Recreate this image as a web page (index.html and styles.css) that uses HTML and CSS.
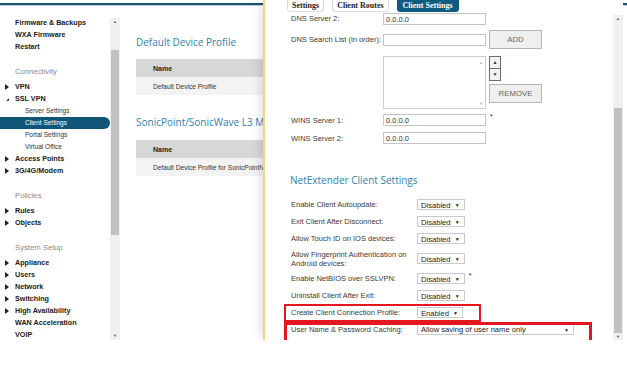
FILE: index.html
```html
<!DOCTYPE html>
<html>
<head>
    <title>SSL VPN - Client Settings</title>
    <link rel="stylesheet" href="styles.css">
</head>
<body>

<div class="screen">
    <div class="topline"></div>

    <div class="main">
        <div class="sidebar">
            <ul class="nav">
                <li class="item">Firmware &amp; Backups</li>
                <li class="item">WXA Firmware</li>
                <li class="item">Restart</li>

                <li class="section">Connectivity</li>
                <li class="item closed">VPN</li>
                <li class="item open">SSL VPN</li>
                <li class="sub">Server Settings</li>
                <li class="sub active">Client Settings</li>
                <li class="sub">Portal Settings</li>
                <li class="sub">Virtual Office</li>
                <li class="item closed">Access Points</li>
                <li class="item closed">3G/4G/Modem</li>

                <li class="section">Policies</li>
                <li class="item closed">Rules</li>
                <li class="item closed">Objects</li>

                <li class="section">System Setup</li>
                <li class="item closed">Appliance</li>
                <li class="item closed">Users</li>
                <li class="item closed">Network</li>
                <li class="item closed">Switching</li>
                <li class="item closed">High Availability</li>
                <li class="item">WAN Acceleration</li>
                <li class="item">VOIP</li>
            </ul>
            <div class="vscroll side-scroll">
                <div class="arrow">&#9650;</div>
                <div class="track"><div class="thumb"></div></div>
                <div class="arrow">&#9660;</div>
            </div>
        </div>

        <div class="content">
            <h3 class="title first">Default Device Profile</h3>
            <table class="grid">
                <thead>
                    <tr><th>Name</th></tr>
                </thead>
                <tbody>
                    <tr><td>Default Device Profile</td></tr>
                </tbody>
            </table>

            <h3 class="title">SonicPoint/SonicWave L3 Management Default Profile</h3>
            <table class="grid">
                <thead>
                    <tr><th>Name</th></tr>
                </thead>
                <tbody>
                    <tr><td>Default Device Profile for SonicPointN</td></tr>
                </tbody>
            </table>
        </div>
    </div>

    <!-- slide-in settings panel -->
    <div class="panel">
        <div class="panel-main">
            <div class="tabs">
                <span class="tab">Settings</span>
                <span class="tab">Client Routes</span>
                <span class="tab active">Client Settings</span>
            </div>

            <div class="form">
                <div class="row r-dns2">
                    <span class="label">DNS Server 2:</span>
                    <span class="field">0.0.0.0</span>
                </div>
                <div class="row r-search">
                    <span class="label">DNS Search List (in order):</span>
                    <span class="field"></span>
                    <span class="btn btn-add">ADD</span>
                </div>
                <div class="row r-list">
                    <span class="label"></span>
                    <div class="listbox">
                        <span class="lb-arrow">&#9650;</span>
                        <span class="lb-arrow">&#9660;</span>
                    </div>
                    <div class="list-ctrl">
                        <div class="updown">
                            <span>&#9650;</span>
                            <span>&#9660;</span>
                        </div>
                        <span class="btn btn-remove">REMOVE</span>
                    </div>
                </div>
                <div class="row r-wins">
                    <span class="label">WINS Server 1:</span>
                    <span class="field">0.0.0.0</span>
                    <span class="req">*</span>
                </div>
                <div class="row r-wins">
                    <span class="label">WINS Server 2:</span>
                    <span class="field">0.0.0.0</span>
                </div>

                <h3 class="title sub-title">NetExtender Client Settings</h3>

                <div class="opt">
                    <span class="label">Enable Client Autoupdate:</span>
                    <span class="select">Disabled <i>&#9660;</i></span>
                </div>
                <div class="opt">
                    <span class="label">Exit Client After Disconnect:</span>
                    <span class="select">Disabled <i>&#9660;</i></span>
                </div>
                <div class="opt">
                    <span class="label">Allow Touch ID on IOS devices:</span>
                    <span class="select">Disabled <i>&#9660;</i></span>
                </div>
                <div class="opt tall">
                    <span class="label">Allow Fingerprint Authentication on Android devices:</span>
                    <span class="select">Disabled <i>&#9660;</i></span>
                </div>
                <div class="opt">
                    <span class="label">Enable NetBIOS over SSLVPN:</span>
                    <span class="select">Disabled <i>&#9660;</i></span>
                    <span class="req">*</span>
                </div>
                <div class="opt">
                    <span class="label">Uninstall Client After Exit:</span>
                    <span class="select">Disabled <i>&#9660;</i></span>
                </div>
                <div class="opt marked">
                    <span class="label">Create Client Connection Profile:</span>
                    <span class="select">Enabled <i>&#9660;</i></span>
                    <span class="mark mark-one"></span>
                </div>
                <div class="opt marked">
                    <span class="label">User Name &amp; Password Caching:</span>
                    <span class="select wide">Allow saving of user name only <i>&#9660;</i></span>
                    <span class="mark mark-two"></span>
                </div>
            </div>
        </div>

        <div class="vscroll panel-scroll">
            <div class="arrow">&#9650;</div>
            <div class="track"><div class="thumb"></div></div>
            <div class="arrow">&#9660;</div>
        </div>
    </div>
</div>

</body>
</html>
```

FILE: styles.css
```css
body {
    margin: 0;
    background: #fff;
    font-family: "Liberation Sans", Arial, sans-serif;
    color: #333;
}
.screen {
    position: relative;
    width: 627px;
    height: 340px;
    display: flex;
    flex-direction: column;
}
.topline {
    margin-top: 3px;
    height: 2px;
    background: #1d4f70;
    border-bottom: 1px solid #b9d2e3;
}
.main {
    flex: 1;
    display: flex;
    min-height: 0;
}

/* sidebar */
.sidebar {
    width: 121px;
    flex: none;
    display: flex;
}
.nav {
    list-style: none;
    margin: 0;
    padding: 11px 0 0 0;
    width: 110px;
}
.nav li {
    height: 12px;
    line-height: 12px;
    white-space: nowrap;
}
.item {
    padding-left: 15px;
    font-weight: bold;
    font-size: 7.2px;
    color: #1a1a1a;
}
.closed::before {
    content: "";
    display: inline-block;
    margin-left: -10px;
    margin-right: 6px;
    border-left: 4px solid #222;
    border-top: 3px solid transparent;
    border-bottom: 3px solid transparent;
    vertical-align: -1px;
}
.open::before {
    content: "";
    display: inline-block;
    margin-left: -9px;
    margin-right: 6px;
    border-right: 3px solid #444;
    border-top: 3px solid transparent;
    vertical-align: 0;
}
.section {
    padding-left: 15px;
    margin: 13px 0 3px 0;
    font-size: 7.7px;
    color: #8a8a8a;
}
.sub {
    padding-left: 25px;
    font-size: 6.5px;
    color: #333;
}
.sub.active {
    background: #0f5577;
    color: #fff;
    border-radius: 0 6px 6px 0;
}

/* scrollbars */
.vscroll {
    width: 10px;
    display: flex;
    flex-direction: column;
    background: #f0f0f0;
}
.vscroll .arrow {
    height: 8px;
    line-height: 8px;
    font-size: 4px;
    text-align: center;
    color: #555;
}
.vscroll .track {
    flex: 1;
    display: flex;
    flex-direction: column;
}
.vscroll .thumb {
    margin: 0 1px;
    background: #c2c2c2;
}
.side-scroll {
    margin-top: 12px;
}
.side-scroll .thumb {
    margin-top: 24px;
    height: 185px;
}
.panel-scroll {
    margin-top: 15px;
}
.panel-scroll .thumb {
    margin-top: 85px;
    height: 225px;
}

/* page content, cut off where the panel starts */
.content {
    width: 127px;
    flex: none;
    padding-left: 15px;
    overflow: hidden;
}
.title {
    margin: 20px 0 11px 0;
    height: 14px;
    line-height: 14px;
    font-family: "Open Sans", "Liberation Sans", sans-serif;
    font-weight: normal;
    font-size: 10px;
    color: #2f7fb0;
    white-space: nowrap;
}
.title.first {
    margin-top: 29px;
    margin-bottom: 10px;
}
.grid {
    border-collapse: collapse;
    width: 100%;
}
.grid th, .grid td {
    height: 18px;
    padding: 0 0 0 17px;
    text-align: left;
    white-space: nowrap;
}
.grid th {
    background: #d7d7d7;
    font-size: 7px;
    color: #222;
}
.grid td {
    background: #f3f3f3;
    font-size: 6.6px;
    color: #333;
}

/* panel */
.panel {
    position: absolute;
    top: 0;
    left: 263px;
    width: 360px;
    height: 340px;
    display: flex;
    background: #fff;
    border-left: 2px solid #f2d38a;
    box-sizing: border-box;
    box-shadow: -7px 0 8px -3px rgba(0, 0, 0, 0.1);
}
.panel-main {
    flex: 1;
}
.tabs {
    height: 12px;
    overflow: hidden;
    display: flex;
    gap: 8px;
    padding-left: 22px;
}
.tab {
    margin-top: -4px;
    height: 16px;
    line-height: 17px;
    padding: 0 4px;
    border: 1px solid #dcdcdc;
    border-radius: 3px;
    font-family: "Liberation Serif", serif;
    font-weight: bold;
    font-size: 8px;
    color: #222;
    box-sizing: border-box;
}
.tab.active {
    background: #0d5b80;
    border-color: #0d5b80;
    color: #fff;
    padding: 0 5px;
}
.form {
    padding-left: 26px;
}
.label {
    font-size: 7.5px;
    color: #3a3a3a;
}
.row {
    display: flex;
    align-items: center;
}
.row .label {
    width: 92px;
    flex: none;
    white-space: nowrap;
}
.field {
    width: 103px;
    height: 12px;
    line-height: 11px;
    padding-left: 2px;
    border: 1px solid #c4c4c4;
    box-sizing: border-box;
    font-size: 7.5px;
    color: #333;
}
.r-dns2 {
    height: 13px;
}
.r-search {
    margin-top: 4px;
    height: 21px;
}
.btn {
    margin-left: 3px;
    width: 53px;
    height: 19px;
    line-height: 17px;
    text-align: center;
    background: #efefef;
    border: 1px solid #b4b4b4;
    box-sizing: border-box;
    font-size: 7.8px;
    color: #666;
}
.r-list {
    margin-top: 6px;
    align-items: flex-start;
}
.listbox {
    width: 103px;
    height: 53px;
    border: 1px solid #cdcdcd;
    box-sizing: border-box;
    display: flex;
    flex-direction: column;
    justify-content: space-between;
    align-items: flex-end;
    padding: 3px 2px 2px 0;
}
.lb-arrow {
    font-size: 4px;
    color: #b5b5b5;
}
.list-ctrl {
    display: flex;
    flex-direction: column;
    gap: 3px;
}
.updown {
    margin-left: 3px;
    width: 12px;
    display: flex;
    flex-direction: column;
    border: 1px solid #6d6d6d;
    box-sizing: border-box;
}
.updown span {
    height: 11px;
    line-height: 11px;
    text-align: center;
    font-size: 5px;
    color: #333;
    background: #f2f2f2;
}
.updown span + span {
    border-top: 1px solid #6d6d6d;
}
.r-wins {
    margin-top: 4px;
    height: 14px;
}
.req {
    align-self: flex-start;
    margin-left: 4px;
    font-size: 7px;
    line-height: 7px;
    color: #222;
}
.sub-title {
    margin: 27px 0 8px -1px;
    height: 16px;
    line-height: 16px;
}
.opt {
    position: relative;
    display: flex;
    align-items: center;
    height: 17px;
}
.opt.tall {
    height: 23px;
}
.opt .label {
    width: 126px;
    flex: none;
    line-height: 9px;
}
.opt.tall .label {
    width: 118px;
    margin-right: 8px;
}
.select {
    height: 11px;
    line-height: 10px;
    padding: 0 4px 0 3px;
    border: 1px solid #cacaca;
    box-sizing: border-box;
    font-size: 7.6px;
    color: #222;
    white-space: nowrap;
}
.select i {
    font-style: normal;
    font-size: 5px;
    margin-left: 2px;
    vertical-align: 1px;
}
.select.wide {
    width: 157px;
    display: flex;
    justify-content: space-between;
}
.opt .req {
    margin-top: 2px;
}

/* red annotation boxes */
.mark {
    position: absolute;
    left: -7px;
    border: 2px solid #e4161f;
    box-sizing: border-box;
}
.mark-one {
    top: 0;
    width: 197px;
    height: 18px;
}
.mark-two {
    top: 1px;
    width: 308px;
    height: 23px;
    border-width: 3px;
}
```
